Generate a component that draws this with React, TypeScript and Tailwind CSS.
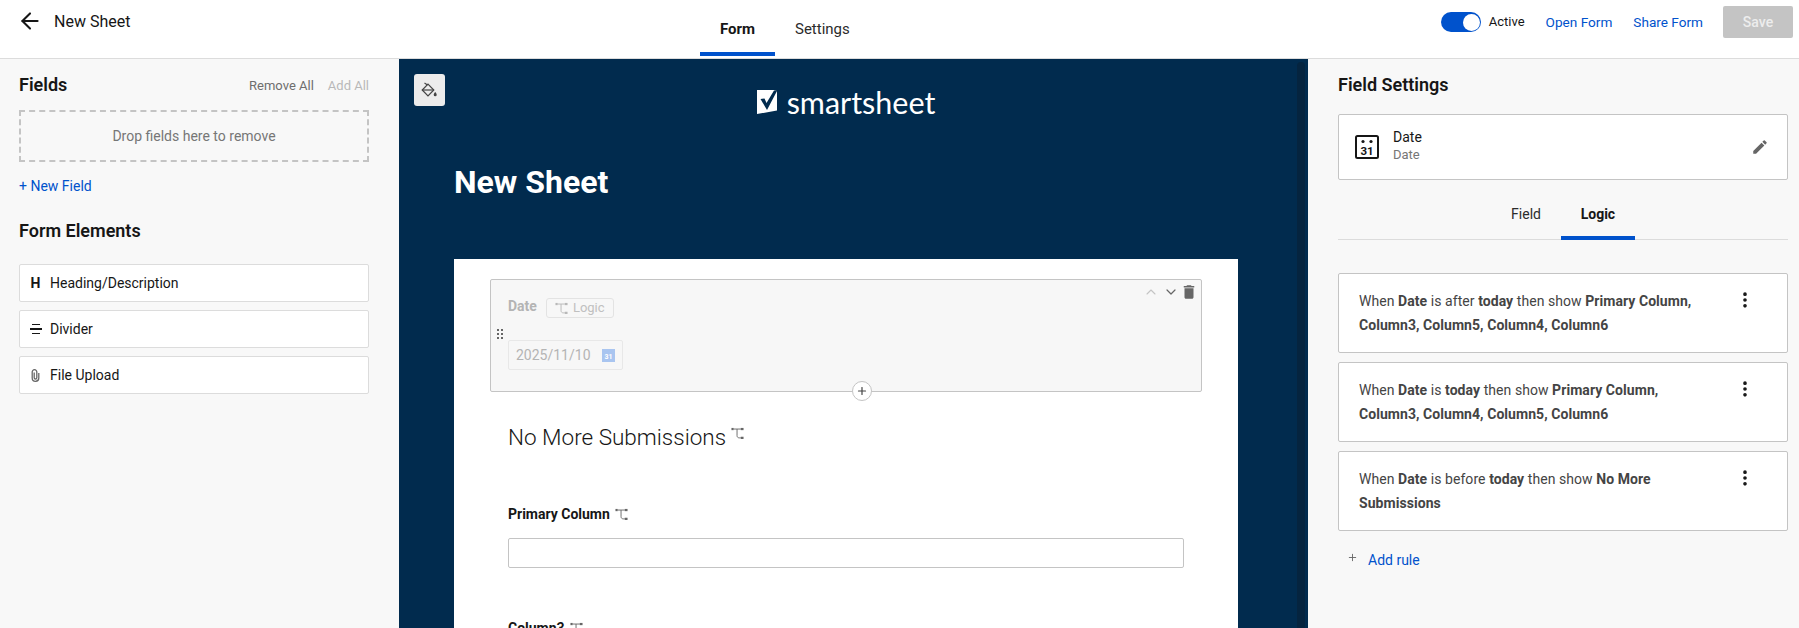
import { ArrowLeft, Plus, ChevronUp, ChevronDown, MoreVertical } from 'lucide-react'

const LogicIcon = ({ className = '' }: { className?: string }) => (
  <svg viewBox="0 0 14 14" className={className} fill="none">
    <rect x="0.5" y="1" width="2.4" height="2.4" fill="currentColor" />
    <rect x="10.5" y="1" width="3" height="2.4" fill="currentColor" />
    <rect x="10.5" y="10.5" width="3" height="2.4" fill="currentColor" />
    <path d="M3 2.2h7.5M6.5 2.2v7c0 1.6 1 2.5 2.4 2.5h1.6" stroke="currentColor" strokeWidth="1" />
  </svg>
)

const CalendarIcon = ({ className = '' }: { className?: string }) => (
  <svg viewBox="0 0 24 24" className={className} fill="none">
    <rect x="1" y="1" width="22" height="22" rx="1.5" stroke="currentColor" strokeWidth="2" />
    <circle cx="8" cy="6.5" r="1.6" fill="currentColor" />
    <circle cx="16" cy="6.5" r="1.6" fill="currentColor" />
    <text x="12" y="19.5" textAnchor="middle" fontSize="11.5" fontWeight="700" fill="currentColor" fontFamily="Roboto, sans-serif">
      31
    </text>
  </svg>
)

const rules = [
  {
    id: 1,
    condition: 'is after',
    targets: 'Primary Column, Column3, Column5, Column4, Column6',
  },
  {
    id: 2,
    condition: 'is',
    targets: 'Primary Column, Column3, Column4, Column5, Column6',
  },
  {
    id: 3,
    condition: 'is before',
    targets: 'No More Submissions',
  },
]

const Header = () => (
  <header className="flex h-[59px] shrink-0 items-start border-b border-[#dcdcdc] bg-white">
    <div className="flex w-[399px] items-center pl-[17px] pt-[8px]">
      <ArrowLeft size={26} strokeWidth={1.9} className="text-[#161616]" />
      <span className="ml-[11px] pt-[1px] text-base text-[#161616]">New Sheet</span>
    </div>
    <nav className="flex flex-1 justify-start pl-[301px]">
      <div className="flex h-[56px] w-[75px] items-center justify-center border-b-4 border-[#0052cc] pt-[6px] text-[15px] font-bold text-[#161616]">
        Form
      </div>
      <div className="ml-[20px] flex h-[56px] items-center pt-[2px] text-[15px] text-[#2b2b2b]">Settings</div>
    </nav>
    <div className="flex w-[491px] items-start justify-end pr-[6px] pt-[6px]">
      <div className="mt-[6px] flex h-[20px] w-[40px] items-center justify-end rounded-full bg-[#0052cc] pr-[1px]">
        <div className="h-[17px] w-[17px] rounded-full bg-white" />
      </div>
      <span className="ml-[8px] mt-[6px] text-[13px] leading-[20px] text-[#161616]">Active</span>
      <a className="ml-[21px] mt-[6px] text-[13.6px] leading-[20px] text-[#0052cc]">Open Form</a>
      <a className="ml-[21px] mt-[6px] text-[13.6px] leading-[20px] text-[#0052cc]">Share Form</a>
      <button className="ml-[20px] h-[32px] w-[70px] rounded-[2px] bg-[#c4c4c4] text-sm font-medium text-[#ededed]">Save</button>
    </div>
  </header>
)

const FieldsPanel = () => (
  <aside className="w-[399px] shrink-0 bg-[#f8f8f8] pl-[19px] pr-[30px]">
    <div className="flex h-[51px] items-center justify-between pt-[1px]">
      <h2 className="text-lg font-semibold text-[#161616]">Fields</h2>
      <div className="flex gap-[14px] pt-[2px] text-[13px]">
        <span className="text-[#6e6e6e]">Remove All</span>
        <span className="text-[#b8b8b8]">Add All</span>
      </div>
    </div>
    <div className="flex h-[52px] items-center justify-center border-2 border-dashed border-[#c4c4c4] text-sm text-[#767676]">
      Drop fields here to remove
    </div>
    <div className="mt-[14px] text-sm leading-[20px] text-[#0052cc]">+ New Field</div>
    <h2 className="mt-[21px] text-lg leading-[28px] font-semibold text-[#161616]">Form Elements</h2>
    <div className="mt-[19px] flex flex-col gap-[8px]">
      <div className="flex h-[38px] items-center rounded-[2px] border border-[#dcdcdc] bg-white text-sm text-[#161616]">
        <span className="flex w-[30px] justify-center pl-[1px] text-sm font-bold">H</span>
        <span>Heading/Description</span>
      </div>
      <div className="flex h-[38px] items-center rounded-[2px] border border-[#dcdcdc] bg-white text-sm text-[#161616]">
        <span className="flex w-[30px] flex-col items-center gap-[3px] pl-[1px]">
          <span className="h-[1px] w-[8px] bg-[#161616]" />
          <span className="h-[2px] w-[12px] bg-[#161616]" />
          <span className="h-[1px] w-[8px] bg-[#161616]" />
        </span>
        <span>Divider</span>
      </div>
      <div className="flex h-[38px] items-center rounded-[2px] border border-[#dcdcdc] bg-white text-sm text-[#161616]">
        <span className="flex w-[30px] justify-center pl-[1px]">
          <svg viewBox="0 0 9 13" className="h-[13px] w-[9px]" fill="none" stroke="#666666" strokeWidth="1.3">
            <path d="M3.2 3.5v5.2a1.3 1.3 0 002.6 0V3a2.3 2.3 0 00-4.6 0v6a3.3 3.3 0 006.6 0V4" />
          </svg>
        </span>
        <span>File Upload</span>
      </div>
    </div>
  </aside>
)

const FormCanvas = () => (
  <main className="relative flex-1 overflow-hidden bg-[#012b4e] pl-[55px] pr-[70px]">
    <button className="absolute left-[15px] top-[15px] flex h-[32px] w-[31px] items-center justify-center rounded-[3px] bg-[#ececec]">
      <svg viewBox="0 0 17 16" className="h-[16px] w-[17px]" fill="none" stroke="#444444" strokeWidth="1.2">
        <path d="M3.5 1l3 2" />
        <path d="M7 2.2L12.8 8 7 13.8 1.2 8z" />
        <path d="M1.2 8h11.6" />
        <path d="M14.2 10c-1 1.3-1.5 2-1.5 2.8a1.5 1.5 0 003 0c0-.8-.5-1.5-1.5-2.8z" fill="#444444" stroke="none" />
      </svg>
    </button>
    <div className="absolute right-[3px] top-[3px] h-[600px] w-[8px] rounded-full bg-[#05243f]" />
    <div className="flex h-[60px] items-end justify-center">
      <div className="flex items-center gap-[10px]">
        <svg viewBox="0 0 20 24" className="h-[24px] w-[20px]">
          <path d="M0 0h20v20.5L0 24z" fill="#ffffff" />
          <path d="M3.5 9L7.5 8.5 9.5 13 17 0.5 20 0v1L10 20z" fill="#012b4e" />
        </svg>
        <span className="font-['Lato'] text-[30.5px] leading-[34px] font-normal text-white">smartsheet</span>
      </div>
    </div>
    <h1 className="mt-[45px] h-[28px] text-[32px] leading-[36px] font-bold text-white">New Sheet</h1>
    <section className="mt-[67px] h-[600px] bg-white pl-[36px] pt-[20px] pr-[36px]">
      <div className="relative h-[113px] rounded-[2px] border border-[#c4c4c4] bg-[#f7f7f7] pl-[17px] pt-[16px]">
        <div className="flex items-start">
          <span className="text-sm leading-[20px] font-bold text-[#b4b4b4]">Date</span>
          <span className="ml-[9px] mt-[2px] flex h-[20px] w-[68px] items-center rounded-[3px] border border-[#e3e3e3] pl-[8px] text-[13px] text-[#c0c0c0]">
            <LogicIcon className="mr-[5px] h-[13px] w-[13px] text-[#b8b8b8]" />
            Logic
          </span>
        </div>
        <div className="mt-[22px] flex h-[30px] w-[115px] items-center justify-between rounded-[2px] border border-[#e8e8e8] pl-[7px] pr-[7px] text-sm text-[#b4b4b4]">
          <span>2025/11/10</span>
          <span className="flex h-[13px] w-[13px] items-end justify-center bg-[#a9c5f0] text-[7px] leading-[9px] font-bold text-white">31</span>
        </div>
        <svg viewBox="0 0 6 10" className="absolute left-[6px] top-[49px] h-[10px] w-[6px]" fill="#666666">
          <rect x="0" y="0" width="2" height="2" />
          <rect x="4" y="0" width="2" height="2" />
          <rect x="0" y="4" width="2" height="2" />
          <rect x="4" y="4" width="2" height="2" />
          <rect x="0" y="8" width="2" height="2" />
          <rect x="4" y="8" width="2" height="2" />
        </svg>
        <div className="absolute right-[3px] top-[3px] flex items-center">
          <ChevronUp size={16} strokeWidth={1.6} className="text-[#c4c4c4]" />
          <ChevronDown size={16} strokeWidth={1.8} className="ml-[4px] text-[#666666]" />
          <svg viewBox="0 0 24 24" className="ml-[1px] h-[18px] w-[18px]" fill="#666666">
            <path d="M6 19c0 1.1.9 2 2 2h8c1.1 0 2-.9 2-2V7H6v12zM19 4h-3.5l-1-1h-5l-1 1H5v2h14V4z" />
          </svg>
        </div>
        <div className="absolute bottom-[-10px] left-[361px] flex h-[20px] w-[20px] items-center justify-center rounded-full border border-[#c4c4c4] bg-white">
          <Plus size={12} strokeWidth={2.4} className="text-[#444444]" />
        </div>
      </div>
      <div className="mt-[28px] flex items-start pl-[18px]">
        <span className="text-[22.5px] leading-[34px] font-light text-[#161616]">No More Submissions</span>
        <LogicIcon className="ml-[5px] mt-[7px] h-[13px] w-[13px] text-[#666666]" />
      </div>
      <div className="mt-[50px] flex items-center pl-[18px]">
        <span className="text-sm leading-[20px] font-bold text-[#161616]">Primary Column</span>
        <LogicIcon className="ml-[5px] h-[13px] w-[13px] text-[#666666]" />
      </div>
      <div className="ml-[18px] mt-[14px] h-[30px] w-[676px] rounded-[2px] border border-[#c4c4c4]" />
      <div className="mt-[50px] flex items-center pl-[18px]">
        <span className="text-sm leading-[20px] font-bold text-[#161616]">Column3</span>
        <LogicIcon className="ml-[5px] h-[13px] w-[13px] text-[#666666]" />
      </div>
    </section>
  </main>
)

const SettingsPanel = () => (
  <aside className="w-[491px] shrink-0 bg-[#f8f8f8] pl-[30px] pr-[11px]">
    <h2 className="flex h-[51px] items-center pt-[1px] text-lg font-semibold text-[#161616]">Field Settings</h2>
    <div className="mt-[4px] flex h-[66px] items-center rounded-[2px] border border-[#c4c4c4] bg-white pl-[16px] pr-[18px]">
      <CalendarIcon className="h-[24px] w-[24px] text-[#161616]" />
      <div className="ml-[14px] flex-1 pb-[2px]">
        <div className="text-sm leading-[17px] text-[#161616]">Date</div>
        <div className="text-[13px] leading-[17px] text-[#767676]">Date</div>
      </div>
      <svg viewBox="0 0 24 24" className="h-[18px] w-[18px]" fill="#666666">
        <path d="M3 17.25V21h3.75L17.81 9.94l-3.75-3.75L3 17.25zM20.71 7.04a1 1 0 000-1.41l-2.34-2.34a1 1 0 00-1.41 0l-1.83 1.83 3.75 3.75 1.83-1.83z" />
      </svg>
    </div>
    <div className="relative mt-[10px] flex h-[50px] justify-center border-b border-[#dcdcdc]">
      <div className="flex h-[50px] items-center px-[20px] pb-[2px] text-sm text-[#2b2b2b]">Field</div>
      <div className="flex h-[50px] w-[74px] items-center justify-center border-b-4 border-[#0052cc] pt-[2px] text-sm font-bold text-[#161616]">
        Logic
      </div>
    </div>
    <div className="mt-[33px] flex flex-col gap-[9px]">
      {rules.map((rule) => (
        <div key={rule.id} className="relative h-[80px] rounded-[2px] border border-[#c4c4c4] bg-white pl-[20px] pr-[90px] pt-[15px] text-sm leading-[24px] tracking-[0.06px] text-[#444444]">
          When <b className="font-bold">Date</b> {rule.condition} <b className="font-bold">today</b> then show{' '}
          <b className="font-bold">{rule.targets}</b>
          <MoreVertical size={20} strokeWidth={2.4} className="absolute right-[32px] top-[16px] text-[#161616]" />
        </div>
      ))}
    </div>
    <div className="mt-[19px] flex items-center pl-[9px] text-sm leading-[20px] text-[#0052cc]">
      <Plus size={11} strokeWidth={2} className="mb-[6px] mr-[10px] text-[#666666]" />
      Add rule
    </div>
  </aside>
)

export default function App() {
  return (
    <div className="flex h-[628px] w-[1799px] flex-col overflow-hidden bg-white font-['Roboto',sans-serif]">
      <Header />
      <div className="flex min-h-0 flex-1">
        <FieldsPanel />
        <FormCanvas />
        <SettingsPanel />
      </div>
    </div>
  )
}
